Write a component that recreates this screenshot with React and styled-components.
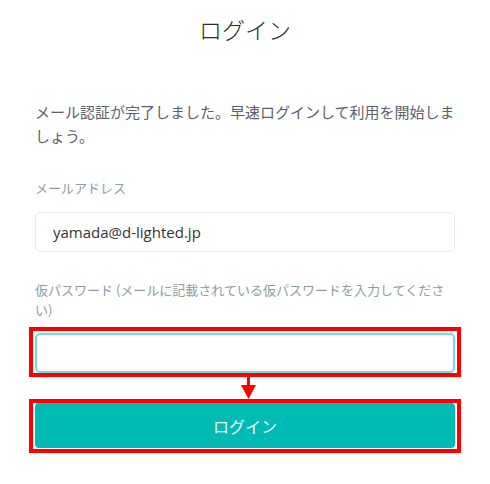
import React from "react";
import styled, { createGlobalStyle } from "styled-components";

const Global = createGlobalStyle`
  html, body { margin: 0; padding: 0; background: #fff; }
  body { font-family: "Noto Sans CJK JP", "Noto Sans", sans-serif; }
  * { box-sizing: border-box; }
`;

const Page = styled.div`
  width: 490px;
  padding: 14px 35px 0 35px;
  display: flex;
  flex-direction: column;
`;

const Title = styled.h1`
  margin: 0;
  font-size: 23px;
  line-height: 30px;
  font-weight: 300;
  color: #2b2b2b;
  text-align: center;
`;

const Message = styled.p`
  margin: 56px -6px 0 0;
  font-size: 15px;
  line-height: 24px;
  color: #5b616b;
`;

const Field = styled.div`
  display: flex;
  flex-direction: column;
  margin-top: ${(p) => p.$top}px;
`;

const Label = styled.label`
  font-size: 13px;
  line-height: 20px;
  color: #8a9da2;
  margin-bottom: ${(p) => p.$gap}px;
`;

const Input = styled.input`
  width: 100%;
  height: 40px;
  border-width: ${(p) => (p.$active ? "2px" : "1px")};
  border-style: solid;
  border-color: ${(p) => (p.$active ? "#74dcd7" : "#e4eaee")};
  border-radius: 5px;
  padding: 0 17px;
  font-family: "Open Sans", "Noto Sans CJK JP", sans-serif;
  font-size: 15px;
  color: #333;
  background: #fff;
  outline: none;
  box-shadow: none;
  appearance: none;
`;

const Highlight = styled.div`
  margin: 0 -6px;
  border: 4px solid #ff0000;
  padding: ${(p) => p.$pad};
`;

const Connector = styled.div`
  height: 22px;
  display: flex;
  justify-content: center;
  padding-left: 6px;
`;

const Button = styled.button`
  width: 100%;
  height: 45px;
  border: none;
  border-radius: 4px;
  background: #00bab4;
  color: #eefaf9;
  font-family: "Noto Sans CJK JP", sans-serif;
  font-size: 16px;
  cursor: pointer;
`;

export default function App() {
  return (
    <>
      <Global />
      <Page>
        <Title>ログイン</Title>
        <Message>
          メール認証が完了しました。早速ログインして利用を開始しましょう。
        </Message>
        <Field $top={30}>
          <Label $gap={14}>メールアドレス</Label>
          <Input defaultValue="yamada@d-lighted.jp" />
        </Field>
        <Field $top={28}>
          <Label $gap={7}>
            仮パスワード (メールに記載されている仮パスワードを入力してください)
          </Label>
          <Highlight $pad="2px 2px 0 2px">
            <Input type="password" $active />
          </Highlight>
        </Field>
        <Connector>
          <svg width="15" height="22" viewBox="0 0 15 22">
            <rect x="6" y="0" width="3" height="9" fill="#ff0000" />
            <polygon points="0,8 15,8 7.5,22" fill="#ff0000" />
          </svg>
        </Connector>
        <Highlight $pad="0 2px 1px 2px">
          <Button>ログイン</Button>
        </Highlight>
      </Page>
    </>
  );
}
